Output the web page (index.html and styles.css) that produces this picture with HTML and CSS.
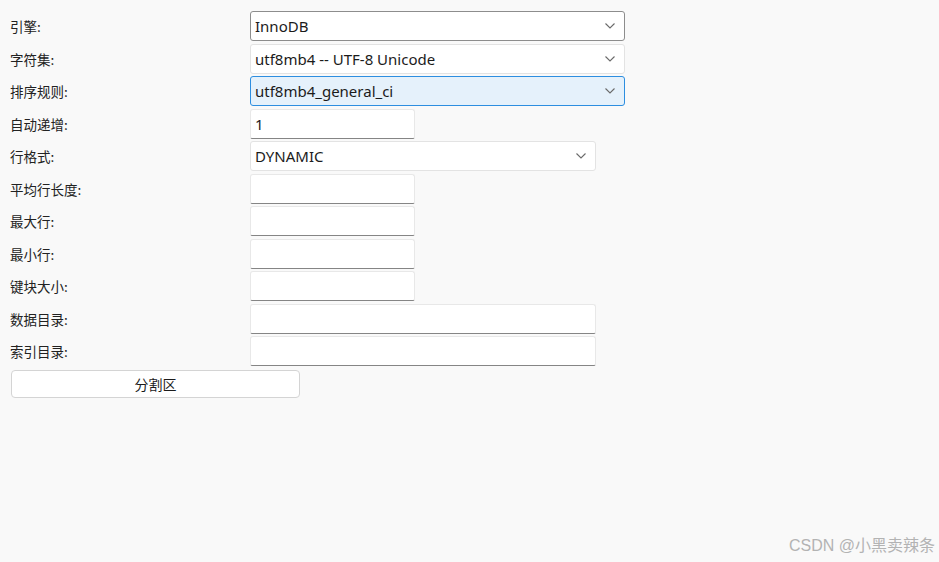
FILE: index.html
```html
<!DOCTYPE html>
<html lang="zh">
<head>
<meta charset="utf-8">
<link rel="stylesheet" href="styles.css">
</head>
<body>
<div class="form">
  <div class="row"><span class="label">引擎:</span><div class="select wide sel-dark"><span>InnoDB</span><svg class="chev" viewBox="0 0 10 6"><path d="M0.5 0.5 L5 5 L9.5 0.5"/></svg></div></div>
  <div class="row"><span class="label">字符集:</span><div class="select wide"><span>utf8mb4 -- UTF-8 Unicode</span><svg class="chev" viewBox="0 0 10 6"><path d="M0.5 0.5 L5 5 L9.5 0.5"/></svg></div></div>
  <div class="row"><span class="label">排序规则:</span><div class="select wide sel-focus"><span>utf8mb4_general_ci</span><svg class="chev" viewBox="0 0 10 6"><path d="M0.5 0.5 L5 5 L9.5 0.5"/></svg></div></div>
  <div class="row"><span class="label">自动递增:</span><div class="input short"><span>1</span></div></div>
  <div class="row"><span class="label">行格式:</span><div class="select mid"><span>DYNAMIC</span><svg class="chev" viewBox="0 0 10 6"><path d="M0.5 0.5 L5 5 L9.5 0.5"/></svg></div></div>
  <div class="row"><span class="label">平均行长度:</span><div class="input short"></div></div>
  <div class="row"><span class="label">最大行:</span><div class="input short"></div></div>
  <div class="row"><span class="label">最小行:</span><div class="input short"></div></div>
  <div class="row"><span class="label">键块大小:</span><div class="input short"></div></div>
  <div class="row"><span class="label">数据目录:</span><div class="input mid"></div></div>
  <div class="row"><span class="label">索引目录:</span><div class="input mid"></div></div>
  <button class="btn">分割区</button>
</div>
<div class="watermark">CSDN @小黑卖辣条</div>
</body>
</html>
```
FILE: styles.css
```css
html, body {
  margin: 0;
  padding: 0;
  width: 939px;
  height: 562px;
  background: #f9f9f9;
  overflow: hidden;
  font-family: "Noto Sans", "Noto Sans CJK SC", sans-serif;
  color: #1b1b1b;
}
.form {
  display: flex;
  flex-direction: column;
  gap: 2.5px;
  padding: 11px 0 0 10px;
}
.row {
  display: flex;
  align-items: center;
  height: 30px;
}
.label {
  width: 240px;
  font-family: "Noto Sans CJK SC", sans-serif;
  font-size: 13.5px;
  color: #222;
}
.select, .input {
  box-sizing: border-box;
  height: 30px;
  background: #fff;
  display: flex;
  align-items: center;
  justify-content: space-between;
  padding: 0 9px 0 4px;
  font-size: 15px;
  border-radius: 3px;
}
.select {
  border: 1px solid #e3e3e3;
}
.sel-dark {
  border-color: #8d8d8d;
}
.sel-focus {
  border-color: #2d8ee0;
  background: #e5f1fb;
}
.input {
  border: 1px solid #e8e8e8;
  border-bottom: 1px solid #858585;
  border-radius: 3px 3px 2px 2px;
}
.wide { width: 375px; }
.mid { width: 346px; }
.short { width: 165px; }
.chev {
  width: 10px;
  height: 6px;
  fill: none;
  stroke: #6a6a6a;
  stroke-width: 1.1;
}
.btn {
  margin: 1.5px 0 0 1px;
  width: 289px;
  height: 28px;
  box-sizing: border-box;
  background: #fff;
  border: 1px solid #d4d4d4;
  border-radius: 4px;
  font-family: "Noto Sans CJK SC", sans-serif;
  font-size: 14px;
  color: #1b1b1b;
  padding: 0;
}
.watermark {
  position: absolute;
  right: 4px;
  bottom: 6px;
  font-family: "Liberation Sans", "Noto Sans CJK SC", sans-serif;
  font-size: 16px;
  color: #b3b3b3;
}
```
